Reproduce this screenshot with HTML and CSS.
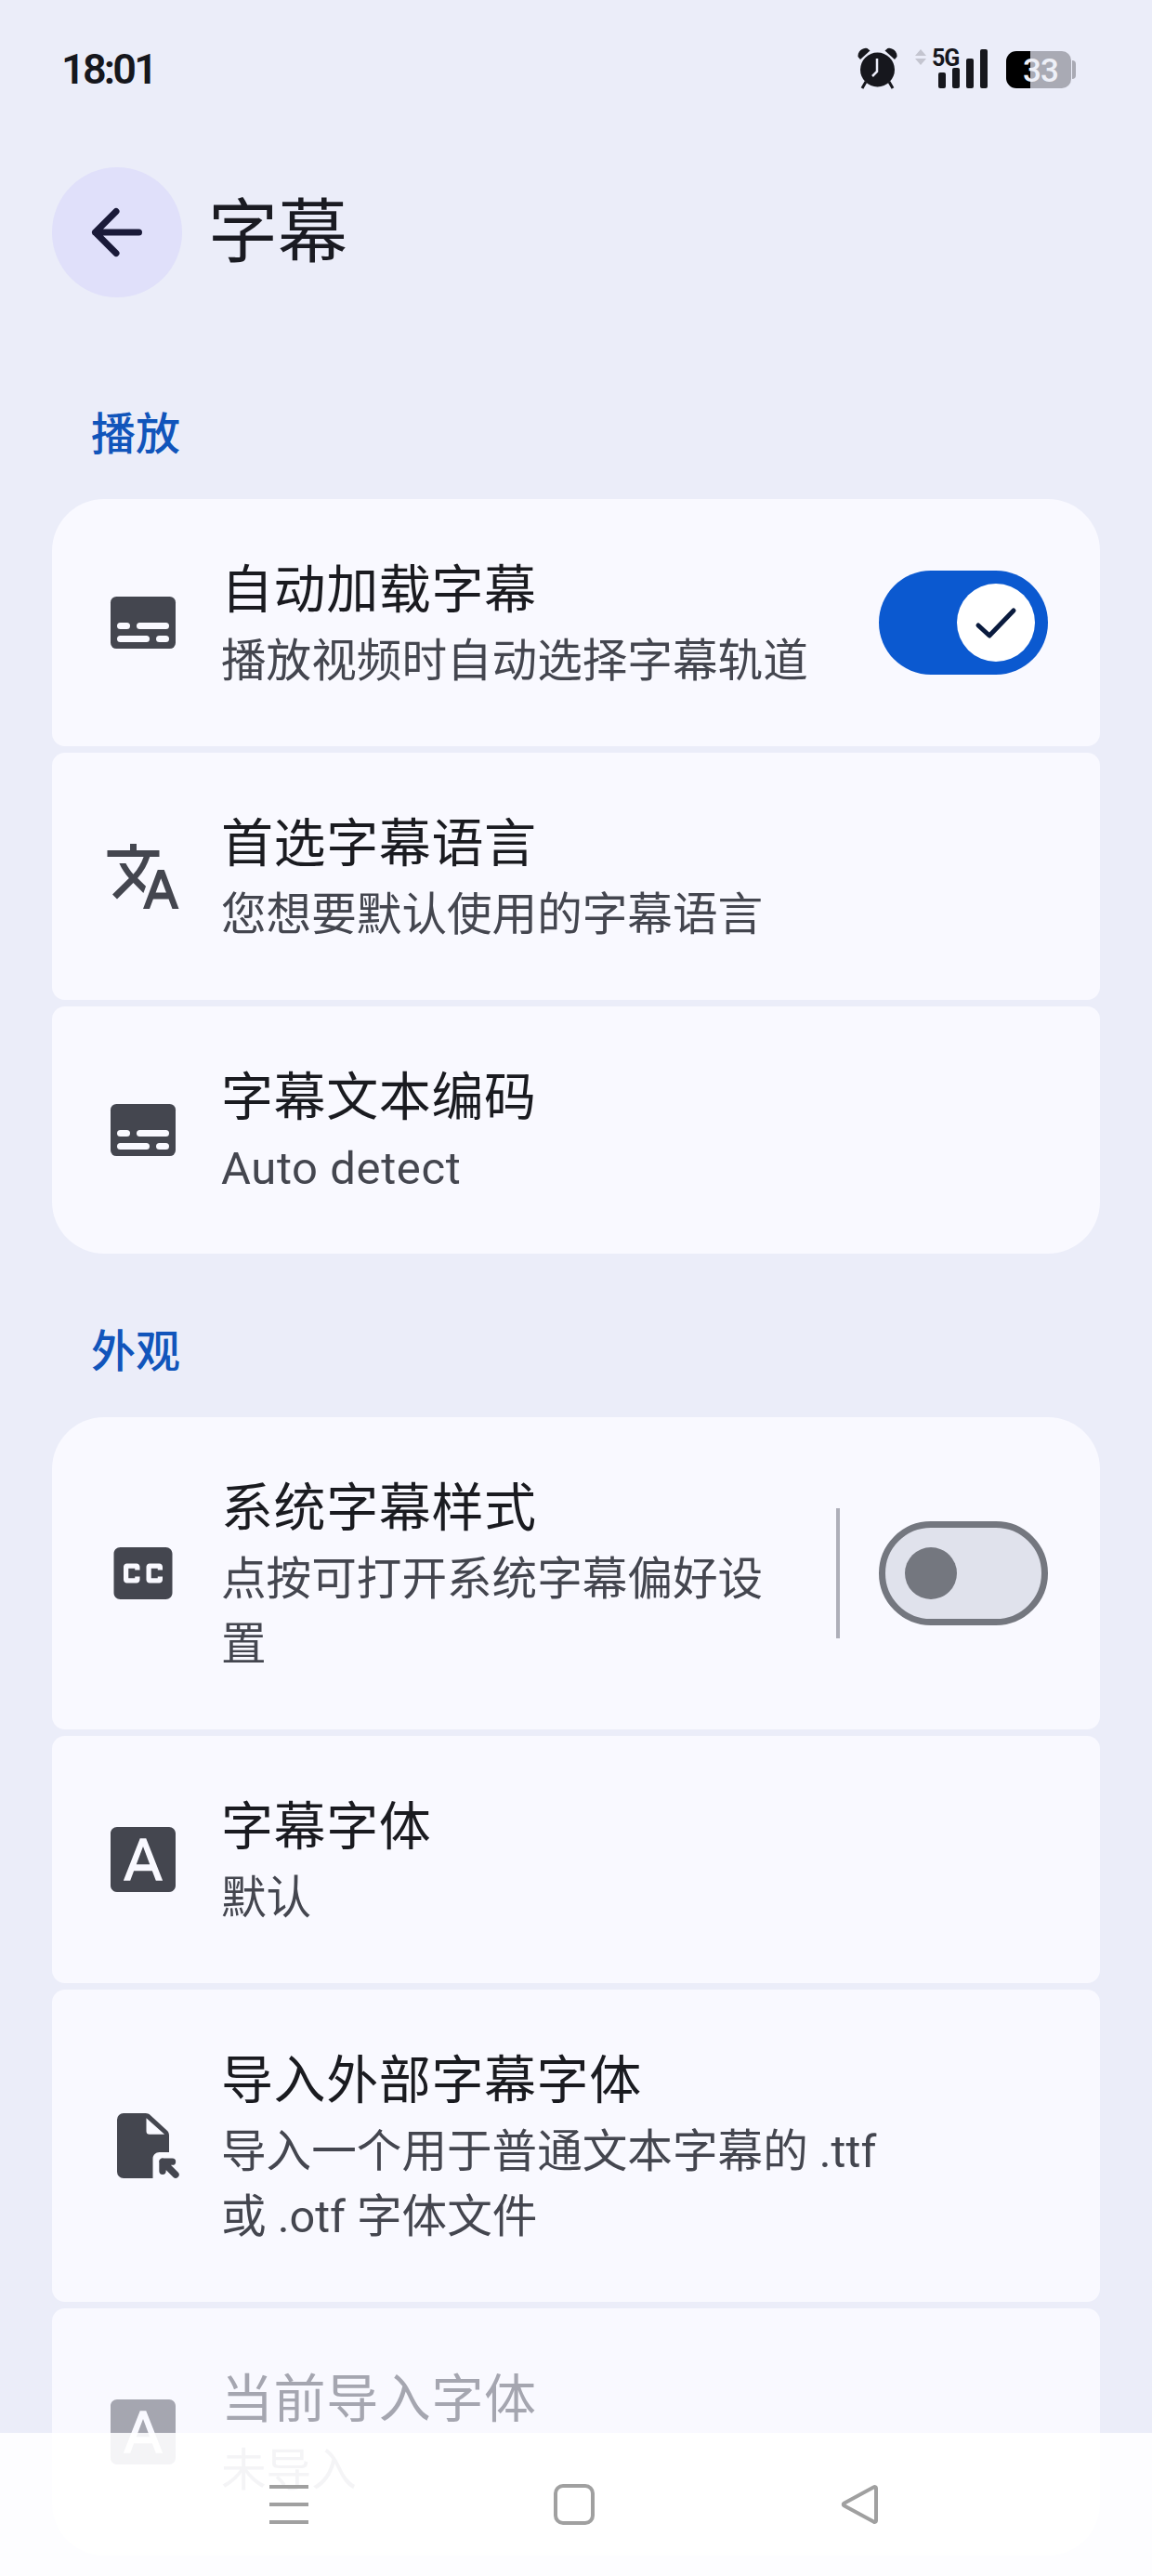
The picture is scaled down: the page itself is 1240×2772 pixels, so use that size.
FILE: index.html
```html
<!DOCTYPE html>
<html lang="zh-CN">
<head>
    <meta charset="UTF-8">
    <meta name="viewport" content="width=device-width, initial-scale=1.0">
    <title>字幕</title>
    <link rel="stylesheet" href="styles.css">
</head>
<body>

    <div class="screen">

        <div class="status-bar">
            <span class="status-bar__time">18:01</span>
            <svg class="status-bar__icons" width="240" height="60" viewBox="0 -10 240 60">
                <!-- alarm -->
                <circle cx="21.5" cy="25" r="18.5" fill="#16171d"/>
                <path d="M0.5 11a8.5 8.5 0 0 1 10-9l3 2.500-10.500 9.500z" fill="#16171d"/>
                <path d="M42.500 11a8.500 8.500 0 0 0-10-9l-3 2.500 10.500 9.500z" fill="#16171d"/>
                <path d="M9 38l-4 7M34 38l4 7" stroke="#16171d" stroke-width="3" fill="none"/>
                <path d="M21 13v14l-5 5" stroke="#ebedf9" stroke-width="2.500" fill="none"/>
                <!-- data arrows -->
                <path d="M68 3l6 7H62zM68 20l6-7H62z" fill="#c4c5d0"/>
                <text class="status-bar__net" x="80" y="21">5G</text>
                <!-- signal -->
                <rect x="87" y="28" width="8" height="17" rx="2" fill="#16171d"/>
                <rect x="102" y="23" width="8" height="22" rx="2" fill="#16171d"/>
                <rect x="117" y="13" width="8" height="32" rx="2" fill="#16171d"/>
                <rect x="132" y="3" width="8" height="42" rx="2" fill="#16171d"/>
                <!-- battery -->
                <path d="M186 5h34a10 10 0 0 1 10 10v20a10 10 0 0 1-10 10h-34z" fill="#a9aab4"/>
                <path d="M231 15a4 4 0 0 1 4 4v12a4 4 0 0 1-4 4z" fill="#a9aab4"/>
                <path d="M171 5h15v40h-15a11 11 0 0 1-11-11V16a11 11 0 0 1 11-11z" fill="#000"/>
                <text class="status-bar__battery" x="197" y="38">33</text>
            </svg>
        </div>

        <header class="header">
            <button type="button" class="header__back" aria-label="back">
                <svg width="56" height="56" viewBox="0 0 56 56">
                    <path d="M4.500 28h47M27 5.500L4.500 28 27 50.500" fill="none" stroke="#1a1a38" stroke-width="7" stroke-linecap="round" stroke-linejoin="round"/>
                </svg>
            </button>
            <h1 class="header__title">字幕</h1>
        </header>

        <section class="section">
            <h2 class="section__label">播放</h2>
            <div class="group">

                <div class="row">
                    <svg class="row__icon" viewBox="0 0 24 24">
                        <rect x="2" y="4" width="20" height="16" rx="1.800"/>
                        <g class="cutout">
                            <rect x="4" y="12" width="4" height="2" rx="1"/>
                            <rect x="10" y="12" width="10" height="2" rx="1"/>
                            <rect x="4" y="16" width="10" height="2" rx="1"/>
                            <rect x="16" y="16" width="4" height="2" rx="1"/>
                        </g>
                    </svg>
                    <div class="row__text">
                        <p class="row__title">自动加载字幕</p>
                        <p class="row__sub">播放视频时自动选择字幕轨道</p>
                    </div>
                    <div class="switch switch--on">
                        <span class="switch__thumb">
                            <svg width="84" height="84" viewBox="0 0 84 84">
                                <path d="M23 45l12 11 26-27" fill="none" stroke="#0a1b3e" stroke-width="5" stroke-linecap="round" stroke-linejoin="round"/>
                            </svg>
                        </span>
                    </div>
                </div>

                <div class="row">
                    <svg class="row__icon" viewBox="0 0 24 24">
                        <path d="M12.870 15.070l-2.540-2.510.03-.03c1.740-1.940 2.980-4.170 3.710-6.530H17V4h-7V2H8v2H1v1.990h11.170C11.500 7.920 10.440 9.750 9 11.350 8.070 10.320 7.300 9.190 6.690 8h-2c.73 1.630 1.730 3.170 2.980 4.560l-5.090 5.020L4 19l5-5 3.110 3.110.76-2.040zM18.500 10h-2L12 22h2l1.120-3h4.750L21 22h2l-4.500-12zm-2.620 7l1.620-4.330L19.120 17h-3.240z"/>
                    </svg>
                    <div class="row__text">
                        <p class="row__title">首选字幕语言</p>
                        <p class="row__sub">您想要默认使用的字幕语言</p>
                    </div>
                </div>

                <div class="row">
                    <svg class="row__icon" viewBox="0 0 24 24">
                        <rect x="2" y="4" width="20" height="16" rx="1.800"/>
                        <g class="cutout">
                            <rect x="4" y="12" width="4" height="2" rx="1"/>
                            <rect x="10" y="12" width="10" height="2" rx="1"/>
                            <rect x="4" y="16" width="10" height="2" rx="1"/>
                            <rect x="16" y="16" width="4" height="2" rx="1"/>
                        </g>
                    </svg>
                    <div class="row__text">
                        <p class="row__title">字幕文本编码</p>
                        <p class="row__sub row__sub--latin">Auto detect</p>
                    </div>
                </div>

            </div>
        </section>

        <section class="section">
            <h2 class="section__label">外观</h2>
            <div class="group">

                <div class="row">
                    <svg class="row__icon" viewBox="0 0 24 24">
                        <path d="M19 4H5c-1.110 0-2 .9-2 2v12c0 1.100.89 2 2 2h14c1.100 0 2-.9 2-2V6c0-1.100-.9-2-2-2zm-8 7H9.500v-.5h-2v3h2V13H11v1c0 .55-.45 1-1 1H7c-.55 0-1-.45-1-1v-4c0-.55.45-1 1-1h3c.55 0 1 .45 1 1v1zm7 0h-1.500v-.5h-2v3h2V13H18v1c0 .55-.45 1-1 1h-3c-.55 0-1-.45-1-1v-4c0-.55.45-1 1-1h3c.55 0 1 .45 1 1v1z"/>
                    </svg>
                    <div class="row__text">
                        <p class="row__title">系统字幕样式</p>
                        <p class="row__sub">点按可打开系统字幕偏好设置</p>
                    </div>
                    <span class="row__divider"></span>
                    <div class="switch">
                        <span class="switch__thumb"></span>
                    </div>
                </div>

                <div class="row">
                    <svg class="row__icon" viewBox="0 0 24 24">
                        <path d="M9.930 13.500h4.140L12 7.980zM20 2H4c-1.100 0-2 .9-2 2v16c0 1.100.9 2 2 2h16c1.100 0 2-.9 2-2V4c0-1.100-.9-2-2-2zm-4.050 16.500l-1.140-3H9.170l-1.120 3H5.960l5.110-13h1.860l5.110 13h-2.090z"/>
                    </svg>
                    <div class="row__text">
                        <p class="row__title">字幕字体</p>
                        <p class="row__sub">默认</p>
                    </div>
                </div>

                <div class="row">
                    <svg class="row__icon" viewBox="0 0 24 24">
                        <path fill-rule="evenodd" d="M6 2h6.800c.5 0 1 .2 1.400.55l5.200 4.800c.4.4.6.9.6 1.450V14h-3c-1.100 0-2 .9-2 2v6H6a2 2 0 0 1-2-2V4a2 2 0 0 1 2-2zM13 3.500V7.500a1 1 0 0 0 1 1h4.600z"/>
                        <path d="M18 19.800V16.900H21M18 16.900l4 4" fill="none" stroke="currentColor" stroke-width="2.100" stroke-linecap="round" stroke-linejoin="round"/>
                    </svg>
                    <div class="row__text">
                        <p class="row__title">导入外部字幕字体</p>
                        <p class="row__sub">导入一个用于普通文本字幕的 .ttf 或 .otf 字体文件</p>
                    </div>
                </div>

                <div class="row row--disabled">
                    <svg class="row__icon" viewBox="0 0 24 24">
                        <path d="M9.930 13.500h4.140L12 7.980zM20 2H4c-1.100 0-2 .9-2 2v16c0 1.100.9 2 2 2h16c1.100 0 2-.9 2-2V4c0-1.100-.9-2-2-2zm-4.050 16.500l-1.140-3H9.170l-1.120 3H5.960l5.110-13h1.860l5.110 13h-2.090z"/>
                    </svg>
                    <div class="row__text">
                        <p class="row__title">当前导入字体</p>
                        <p class="row__sub">未导入</p>
                    </div>
                </div>

            </div>
        </section>

        <nav class="nav-bar">
            <svg class="nav-bar__icon" width="44" height="44" viewBox="0 0 44 44">
                <path d="M1 3h42M1 22h42M1 41h42"/>
            </svg>
            <svg class="nav-bar__icon" width="44" height="44" viewBox="0 0 44 44">
                <rect x="2" y="2" width="40" height="40" rx="8"/>
            </svg>
            <svg class="nav-bar__icon" width="44" height="44" viewBox="0 0 44 44">
                <path d="M40 4.500v35a1.500 1.500 0 0 1-2.300 1.300L5.500 23.300a1.500 1.500 0 0 1 0-2.600L37.700 3.200A1.500 1.500 0 0 1 40 4.500z"/>
            </svg>
        </nav>

    </div>

</body>
</html>
```

FILE: styles.css
```css
*,
*::before,
*::after {
    box-sizing: border-box;
}

body {
    font-family: Roboto, "Noto Sans CJK SC", sans-serif;
    padding: 0;
    margin: 0;
}

h1,
h2,
p {
    margin: 0;
    font-weight: 400;
}

.screen {
    position: relative;
    height: 2772px;
    overflow: hidden;
    background-color: #ebedf9;
}

.status-bar {
    display: flex;
    justify-content: space-between;
    align-items: flex-start;
    height: 180px;
    padding: 40px 77px 0 66px;
}

.status-bar__time {
    font-size: 45px;
    line-height: 50px;
    margin-top: 10px;
    font-weight: 600;
    letter-spacing: -2.800px;
    color: #16171d;
}

.status-bar__icons {
    display: block;
}

.status-bar__net {
    font-size: 25px;
    font-weight: 700;
    letter-spacing: -1px;
    fill: #16171d;
}

.status-bar__battery {
    font-size: 35px;
    font-weight: 500;
    letter-spacing: -1px;
    text-anchor: middle;
    fill: #eef0f8;
}

.header {
    display: flex;
    align-items: center;
    gap: 28px;
    padding: 0 56px;
}

.header__back {
    display: flex;
    justify-content: center;
    align-items: center;
    width: 140px;
    height: 140px;
    padding: 0;
    border: none;
    border-radius: 50%;
    background-color: #e0e0fa;
}

.header__title {
    font-size: 75px;
    line-height: 98px;
    color: #1a1b22;
}

.section {
    padding: 0 56px;
    margin-top: 113px;
}

.section + .section {
    margin-top: 71px;
}

.section__label {
    font-size: 48px;
    line-height: 70px;
    font-weight: 500;
    color: #1155bb;
    padding-left: 42px;
    margin-bottom: 34px;
}

.section + .section .section__label {
    margin-bottom: 35px;
}

.group {
    display: flex;
    flex-direction: column;
    gap: 7px;
}

.row {
    display: flex;
    align-items: center;
    padding: 56px;
    background-color: #f9f9ff;
    border-radius: 14px;
}

.row:first-child {
    border-top-left-radius: 56px;
    border-top-right-radius: 56px;
}

.row:last-child {
    border-bottom-left-radius: 56px;
    border-bottom-right-radius: 56px;
}

.row__icon {
    flex: none;
    width: 84px;
    height: 84px;
    margin-right: 42px;
    color: #44464f;
    fill: currentColor;
}

.row__icon .cutout {
    fill: #f9f9ff;
}

.row__text {
    flex: 1;
    min-width: 0;
    max-width: 740px;
}

.row__title {
    font-size: 56px;
    line-height: 84px;
    letter-spacing: 0.600px;
    color: #1a1b20;
}

.row__sub {
    font-size: 48.600px;
    line-height: 70px;
    color: #44464f;
}

.row__sub--latin {
    font-size: 49px;
    letter-spacing: 0.600px;
}

.row--disabled .row__icon {
    color: #a5a6b0;
}

.row--disabled .row__title,
.row--disabled .row__sub {
    color: #a5a6b0;
}

.row__divider {
    flex: none;
    width: 4px;
    height: 140px;
    margin: 0 42px 0 56px;
    background-color: #aeafb9;
}

.switch {
    flex: none;
    display: flex;
    align-items: center;
    width: 182px;
    height: 112px;
    padding-left: 21px;
    border: 7px solid #74777f;
    border-radius: 56px;
    background-color: #e0e2ec;
}

.switch__thumb {
    display: block;
    width: 56px;
    height: 56px;
    border-radius: 50%;
    background-color: #74777f;
}

.switch--on {
    justify-content: flex-end;
    padding: 0 14px 0 0;
    border: none;
    background-color: #0b59d0;
    margin-left: auto;
}

.switch--on .switch__thumb {
    width: 84px;
    height: 84px;
    background-color: #fff;
}

.switch__thumb svg {
    display: block;
}

/* navigation bar, sits over the end of the list */
.nav-bar {
    position: absolute;
    left: 0;
    right: 0;
    bottom: 0;
    height: 154px;
    display: grid;
    grid-template-columns: repeat(3, 1fr);
    justify-items: center;
    align-items: center;
    padding: 0 162px 0 158px;
    background-color: rgba(255, 255, 255, 0.88);
}

.nav-bar__icon {
    display: block;
    fill: none;
    stroke: #a0a0a0;
    stroke-width: 4;
}
```
